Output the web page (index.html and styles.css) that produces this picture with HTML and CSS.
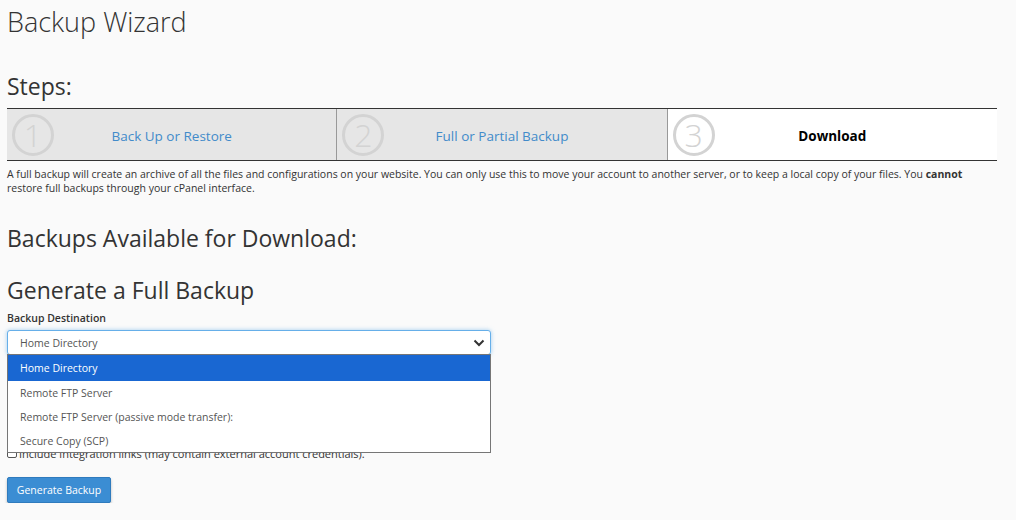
FILE: index.html
```html
<!DOCTYPE html>
<html>
<head>
<meta charset="utf-8">
<link rel="stylesheet" href="styles.css">
</head>
<body>
<div class="page">
  <h1 class="title">Backup Wizard</h1>
  <h2 class="steps-heading">Steps:</h2>
  <div class="steps">
    <div class="step">
      <span class="num">1</span>
      <span class="step-label link">Back Up or Restore</span>
    </div>
    <div class="step">
      <span class="num">2</span>
      <span class="step-label link">Full or Partial Backup</span>
    </div>
    <div class="step active">
      <span class="num">3</span>
      <span class="step-label current">Download</span>
    </div>
  </div>
  <p class="desc">A full backup will create an archive of all the files and configurations on your website. You can only use this to move your account to another server, or to keep a local copy of your files. You <b>cannot</b> restore full backups through your cPanel interface.</p>

  <h2 class="section">Backups Available for Download:</h2>
  <h2 class="section second">Generate a Full Backup</h2>
  <label class="field-label">Backup Destination</label>
  <div class="select-wrap">
    <div class="select">
      <span>Home Directory</span>
      <svg class="chev" width="12" height="8" viewBox="0 0 12 8"><path d="M1.5 1.5 L6 6 L10.5 1.5" fill="none" stroke="#333" stroke-width="2"/></svg>
    </div>
    <ul class="options">
      <li class="selected">Home Directory</li>
      <li>Remote FTP Server</li>
      <li>Remote FTP Server (passive mode transfer):</li>
      <li>Secure Copy (SCP)</li>
    </ul>
  </div>
  <div class="spacer"></div>
  <div class="check-row"><span class="checkbox"></span><span>Include integration links (may contain external account credentials).</span></div>
  <button class="btn">Generate Backup</button>
</div>
</body>
</html>
```

FILE: styles.css
```css
* { box-sizing: border-box; }
html, body { margin: 0; padding: 0; background: #fafafa; }
body { font-family: "Open Sans", "Liberation Sans", sans-serif; color: #333; }
.page { padding: 0 7px; width: 1004px; }
.title { font-weight: 300; font-size: 27px; line-height: 36px; margin: 4px 0 0 0; color: #333; }
.steps-heading { font-weight: 400; font-size: 23px; line-height: 30px; margin: 31px 0 7px 0; }
.steps { display: flex; width: 990px; border-top: 1px solid #333; border-bottom: 1px solid #333; height: 53px; }
.step { flex: 1; display: flex; align-items: center; background: #e6e6e6; border-right: 1px solid #999; position: relative; }
.step.active { background: #fff; border-right: none; }
.num { width: 42px; height: 42px; border: 3px solid #d3d3d3; border-radius: 50%; color: #d3d3d3; font-size: 32px; font-weight: 300; display: flex; align-items: center; justify-content: center; margin-left: 5px; line-height: 1; }
.step-label { flex: 1; text-align: center; font-size: 13.5px; padding-right: 47px; padding-top: 3px; }
.link { color: #428bca; }
.current { color: #000; font-weight: 700; }
.desc { font-size: 10.5px; line-height: 14px; margin: 6px 0 0 0; max-width: 966px; }
.desc b { font-weight: 700; }
.section { font-weight: 400; font-size: 23px; line-height: 30px; margin: 28px 0 0 0; }
.section.second { margin-top: 22px; }
.field-label { display: block; font-size: 10.5px; font-weight: 600; margin-top: 5px; line-height: 16px; }
.select-wrap { position: relative; width: 484px; margin-top: 4px; }
.select { height: 25px; border: 1px solid #66afe9; border-radius: 3px; background: #fff; box-shadow: 0 0 4px rgba(102,175,233,0.6); display: flex; align-items: center; justify-content: space-between; padding: 0 5px 0 12px; font-size: 10.5px; color: #555; }
.chev { margin-top: 1px; }
.options { position: absolute; left: 0; top: 24px; width: 484px; margin: 0; padding: 0; list-style: none; background: #fff; border: 1px solid #767676; font-size: 10.5px; color: #555; z-index: 2; }
.options li { height: 24px; line-height: 24px; padding-left: 12px; }
.options li:last-child { height: 23px; }
.options li.selected { background: #1967d2; color: #fff; height: 26px; line-height: 26px; }
.spacer { height: 90px; }
.check-row { display: flex; align-items: center; font-size: 11px; height: 16px; }
.checkbox { width: 10px; height: 10px; border: 1px solid #555; border-radius: 2px; margin-right: 2px; background: #fff; }
.btn { display: block; margin-top: 16px; background: #3b8dd3; color: #fff; border: 1px solid #2f7bbd; border-radius: 2px; font-family: "Open Sans", sans-serif; font-size: 10.5px; height: 26px; width: 104px; padding: 0; box-shadow: 0 2px 3px rgba(0,0,0,0.25); }
```
